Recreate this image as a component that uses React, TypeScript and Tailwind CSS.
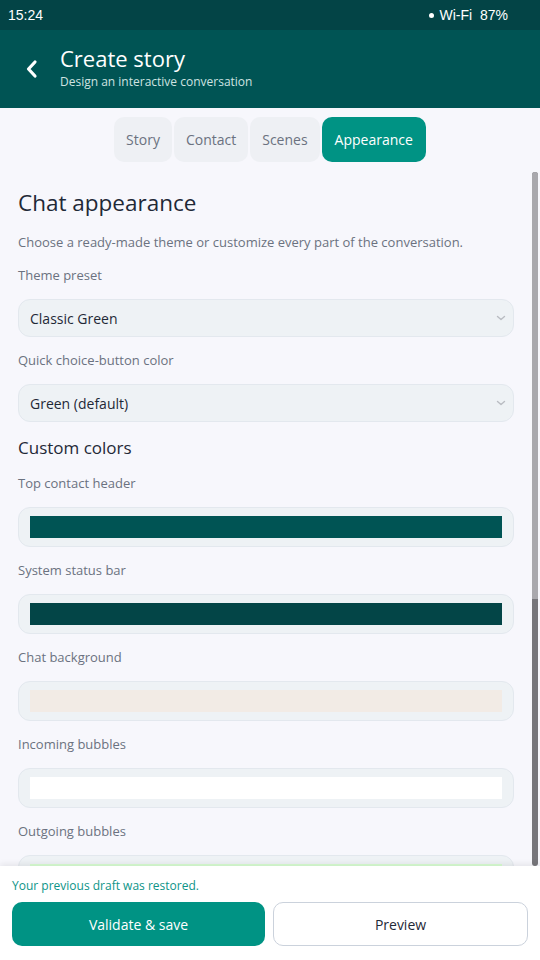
import React from "react";

const font = { fontFamily: '"Open Sans", "Noto Sans", sans-serif' };

function Tab({ label, active }: { label: string; active?: boolean }) {
  return (
    <div
      className={
        "h-[45px] flex items-center rounded-[10px] text-[14px] " +
        (active ? "bg-[#009384] text-white px-[13px]" : "bg-[#eef0f4] text-[#6b7280] px-[12px]")
      }
    >
      {label}
    </div>
  );
}

function Label({ children }: { children: React.ReactNode }) {
  return <div className="text-[13px] text-[#6b7280] leading-[20px]">{children}</div>;
}

function SelectBox({ value }: { value: string }) {
  return (
    <div className="h-[38px] rounded-[12px] bg-[#eef2f5] border border-[#e3e8ee] flex items-center justify-between pl-[11px] pr-[6px]">
      <span className="text-[14px] text-[#1f2937]">{value}</span>
      <svg width="12" height="12" viewBox="0 0 12 12" fill="none">
        <path d="M2.5 4.5 6 7.5 9.5 4.5" stroke="#b9bcc2" strokeWidth="1.4" strokeLinecap="round" strokeLinejoin="round" />
      </svg>
    </div>
  );
}

function ColorBox({ color }: { color: string }) {
  return (
    <div className="h-[40px] rounded-[12px] bg-[#eef2f5] border border-[#e3e8ee] flex items-center px-[11px]">
      <div className="h-[22px] w-full" style={{ backgroundColor: color }} />
    </div>
  );
}

export default function App() {
  const colors = [
    { label: "Top contact header", color: "#005454" },
    { label: "System status bar", color: "#034547" },
    { label: "Chat background", color: "#f2ebe5" },
    { label: "Incoming bubbles", color: "#ffffff" },
    { label: "Outgoing bubbles", color: "#d9fdd3" },
  ];
  return (
    <div className="w-[540px] h-[960px] flex flex-col overflow-hidden bg-[#f7f7fc]" style={font}>
      {/* status bar */}
      <div
        className="h-[30px] bg-[#034446] text-white flex items-center justify-between pl-[8px] pr-[32px] text-[14px]"
        style={{ fontFamily: '"Liberation Sans", Arial, sans-serif' }}
      >
        <span>15:24</span>
        <span className="flex items-center gap-[6px]">
          <span className="w-[5px] h-[5px] rounded-full bg-white" />
          <span>Wi-Fi&nbsp; 87%</span>
        </span>
      </div>
      {/* header */}
      <div className="h-[78px] bg-[#005454] flex items-center pl-[24px]">
        <svg width="16" height="20" viewBox="0 0 16 20" className="mr-[20px]">
          <path d="M11 3 4.5 10 11 17" stroke="white" strokeWidth="3.2" fill="none" strokeLinecap="round" strokeLinejoin="round" />
        </svg>
        <div className="flex flex-col">
          <span className="text-white text-[22px] leading-[28px] mt-[-4px]">Create story</span>
          <span className="text-[#cfe3e1] text-[12px] leading-[16px] mt-[2px]">Design an interactive conversation</span>
        </div>
      </div>
      {/* scrolling content */}
      <div className="relative flex-1 overflow-hidden">
        <div className="flex justify-center gap-[2px] pt-[9px]">
          <Tab label="Story" />
          <Tab label="Contact" />
          <Tab label="Scenes" />
          <Tab label="Appearance" active />
        </div>
        <div className="px-[18px] pr-[26px]">
          <h1 className="text-[22.5px] text-[#1f2937] leading-[30px] mt-[26px]">Chat appearance</h1>
          <p className="text-[13px] text-[#6b7280] leading-[20px] mt-[14px]">
            Choose a ready-made theme or customize every part of the conversation.
          </p>
          <div className="mt-[13px]">
            <Label>Theme preset</Label>
          </div>
          <div className="mt-[14px]">
            <SelectBox value="Classic Green" />
          </div>
          <div className="mt-[13px]">
            <Label>Quick choice-button color</Label>
          </div>
          <div className="mt-[14px]">
            <SelectBox value="Green (default)" />
          </div>
          <h2 className="text-[17px] text-[#1f2937] leading-[24px] mt-[14px]">Custom colors</h2>
          {colors.map((c, i) => (
            <div key={c.label} className={i === 0 ? "mt-[13px]" : "mt-[13px]"}>
              <Label>{c.label}</Label>
              <div className="mt-[14px]">
                <ColorBox color={c.color} />
              </div>
            </div>
          ))}
        </div>
        {/* overlay scrollbar */}
        <div className="absolute right-[2px] top-[64px] w-[6px] h-[694px] rounded-full bg-[#77767b] overflow-hidden">
          <div className="h-[427px] bg-[#a9a8ad]" />
        </div>
      </div>
      {/* bottom action bar */}
      <div className="relative h-[94px] bg-white shadow-[0_-2px_6px_rgba(0,0,0,0.08)] px-[12px] pt-[11px]">
        <div className="text-[12px] text-[#0d9488] leading-[18px]">Your previous draft was restored.</div>
        <div className="flex gap-[8px] mt-[7px]">
          <button className="flex-1 h-[44px] rounded-[10px] bg-[#009384] text-white text-[14px]">Validate &amp; save</button>
          <button className="flex-1 h-[44px] rounded-[10px] bg-white border border-[#cbd2dc] text-[#1f2937] text-[14px]">
            Preview
          </button>
        </div>
      </div>
    </div>
  );
}
